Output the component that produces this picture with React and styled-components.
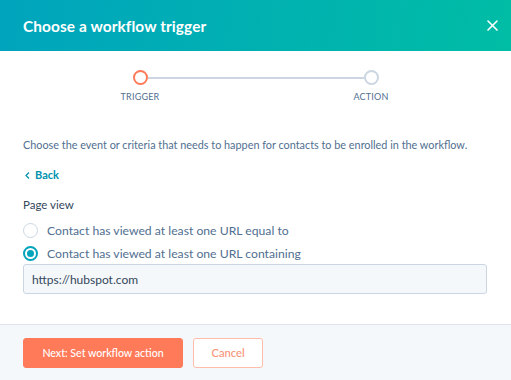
import React, { useState } from 'react'
import styled, { createGlobalStyle } from 'styled-components'

const GlobalStyle = createGlobalStyle`
  html, body {
    margin: 0;
    padding: 0;
    background: #fff;
  }
  body {
    font-family: Lato, "Open Sans", sans-serif;
    color: #33475b;
  }
`

const Modal = styled.div`
  width: 511px;
  height: 380px;
  display: flex;
  flex-direction: column;
  background: #fff;
`

const Header = styled.header`
  height: 51px;
  flex: none;
  display: flex;
  align-items: center;
  justify-content: space-between;
  padding: 0 13px 0 23px;
  background: linear-gradient(100deg, #00a4bd 0%, #00bda5 100%);
  color: #fff;
`

const Title = styled.h1`
  margin: 0;
  font-size: 15.4px;
  font-weight: 700;
  letter-spacing: 0.1px;
`

const CloseButton = styled.button`
  appearance: none;
  border: 0;
  background: none;
  padding: 0;
  width: 11px;
  height: 11px;
  display: flex;
  cursor: pointer;

  svg {
    width: 11px;
    height: 11px;
  }
`

const Body = styled.main`
  flex: 1;
  padding: 19px 23px 0;
  display: flex;
  flex-direction: column;
`

const Stepper = styled.div`
  display: flex;
  justify-content: center;
  align-items: flex-start;
`

const Step = styled.div`
  width: 15px;
  display: flex;
  flex-direction: column;
  align-items: center;
`

const StepDot = styled.span`
  box-sizing: border-box;
  width: 15px;
  height: 15px;
  border-radius: 50%;
  border: 2px solid ${p => (p.$active ? '#ff7a59' : '#cbd6e2')};
  background: #fff;
`

const StepLabel = styled.span`
  margin-top: 6px;
  font-size: 9px;
  line-height: 11px;
  color: #516f90;
  text-transform: uppercase;
  white-space: nowrap;
  letter-spacing: 0.2px;
`

const Connector = styled.span`
  width: 216px;
  height: 2px;
  margin-top: 6.5px;
  background: #cbd6e2;
`

const Description = styled.p`
  margin: 35px 0 0;
  font-size: 10.85px;
  line-height: 16px;
  color: #516f90;
`

const BackLink = styled.a`
  margin-top: 14px;
  display: inline-flex;
  align-items: center;
  gap: 5px;
  align-self: flex-start;
  padding-left: 2px;
  font-size: 11px;
  line-height: 16px;
  font-weight: 700;
  color: #0091ae;
  text-decoration: none;
  cursor: pointer;

  svg {
    width: 5px;
    height: 7px;
  }
`

const FieldLabel = styled.div`
  margin-top: 14px;
  font-size: 11.5px;
  line-height: 16px;
  font-weight: 400;
  color: #33475b;
`

const RadioList = styled.div`
  margin-top: 9px;
  display: flex;
  flex-direction: column;
  gap: 7px;
`

const RadioRow = styled.label`
  display: flex;
  align-items: center;
  gap: 9px;
  height: 16px;
  font-size: 12.2px;
  color: #516f90;
  cursor: pointer;
`

const RadioCircle = styled.span`
  box-sizing: border-box;
  width: 15px;
  height: 15px;
  border-radius: 50%;
  border: ${p => (p.$checked ? '2px solid #00a4bd' : '1px solid #cbd6e2')};
  background: #fff;
  display: flex;
  align-items: center;
  justify-content: center;

  &::after {
    content: '';
    width: 7px;
    height: 7px;
    border-radius: 50%;
    background: #00a4bd;
    display: ${p => (p.$checked ? 'block' : 'none')};
  }
`

const UrlInput = styled.input`
  box-sizing: border-box;
  margin-top: 3px;
  width: 464px;
  height: 30px;
  padding: 0 8px;
  border: 1px solid #cbd6e2;
  border-radius: 3px;
  background: #f5f8fa;
  font-family: inherit;
  font-size: 12px;
  color: #33475b;
  outline: none;
`

const Footer = styled.footer`
  height: 56px;
  flex: none;
  box-sizing: border-box;
  border-top: 1px solid #dfe3eb;
  background: #f5f8fa;
  display: flex;
  align-items: center;
  gap: 10px;
  padding: 0 23px;
`

const Button = styled.button`
  box-sizing: border-box;
  height: 30px;
  width: ${p => (p.$primary ? '160px' : '70px')};
  padding: 0;
  border-radius: 3px;
  border: 1px solid ${p => (p.$primary ? '#ff7a59' : '#ffbca9')};
  background: ${p => (p.$primary ? '#ff7a59' : '#fff')};
  color: ${p => (p.$primary ? '#fff' : '#f89378')};
  font-family: inherit;
  font-size: ${p => (p.$primary ? '10.6px' : '11.2px')};
  font-weight: 500;
  cursor: pointer;
`

const options = [
  'Contact has viewed at least one URL equal to',
  'Contact has viewed at least one URL containing',
]

export default function App() {
  const [choice, setChoice] = useState(1)
  const [url, setUrl] = useState('https://hubspot.com')

  return (
    <Modal>
      <GlobalStyle />
      <Header>
        <Title>Choose a workflow trigger</Title>
        <CloseButton aria-label="Close">
          <svg viewBox="0 0 11 11" fill="none" stroke="#fff" strokeWidth="1.6" strokeLinecap="round">
            <path d="M1 1l9 9M10 1l-9 9" />
          </svg>
        </CloseButton>
      </Header>
      <Body>
        <Stepper>
          <Step>
            <StepDot $active />
            <StepLabel>Trigger</StepLabel>
          </Step>
          <Connector />
          <Step>
            <StepDot />
            <StepLabel>Action</StepLabel>
          </Step>
        </Stepper>
        <Description>
          Choose the event or criteria that needs to happen for contacts to be enrolled in the workflow.
        </Description>
        <BackLink>
          <svg viewBox="0 0 5 7" fill="none" stroke="#0091ae" strokeWidth="1.2">
            <path d="M4 0.5L1 3.5l3 3" />
          </svg>
          Back
        </BackLink>
        <FieldLabel>Page view</FieldLabel>
        <RadioList>
          {options.map((text, i) => (
            <RadioRow key={text} onClick={() => setChoice(i)}>
              <RadioCircle $checked={choice === i} />
              {text}
            </RadioRow>
          ))}
        </RadioList>
        <UrlInput value={url} onChange={e => setUrl(e.target.value)} />
      </Body>
      <Footer>
        <Button $primary>Next: Set workflow action</Button>
        <Button>Cancel</Button>
      </Footer>
    </Modal>
  )
}
